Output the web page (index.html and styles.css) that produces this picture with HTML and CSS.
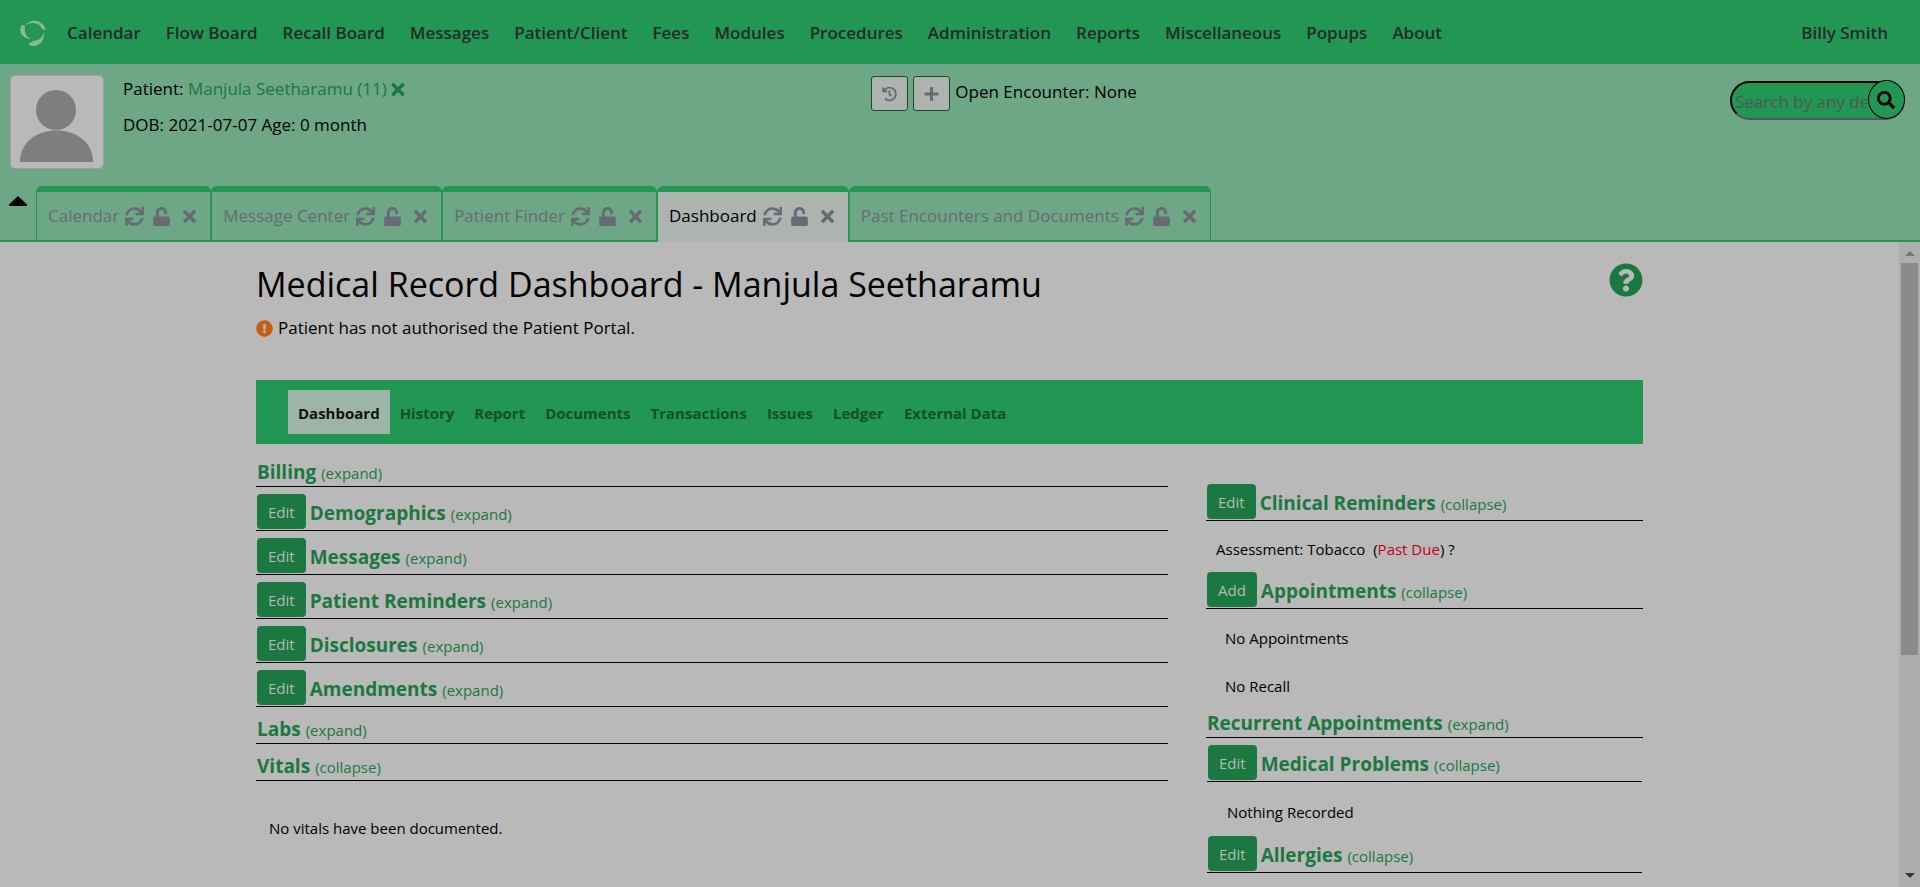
FILE: index.html
```html
<!DOCTYPE html>
<html lang="en">
<head>
<meta charset="utf-8">
<title>Medical Record Dashboard</title>
<link rel="stylesheet" href="styles.css">
</head>
<body>
<svg class="sprite" aria-hidden="true">
  <symbol id="i-sync" viewBox="0 0 512 512"><path d="M440.65 12.57l4 82.77A247.16 247.16 0 0 0 255.83 8C134.73 8 33.91 94.92 12.29 209.82A12 12 0 0 0 24.09 224h49.05a12 12 0 0 0 11.67-9.26 175.91 175.91 0 0 1 317-56.94l-101.46-4.86a12 12 0 0 0-12.57 12v47.41a12 12 0 0 0 12 12H500a12 12 0 0 0 12-12V12a12 12 0 0 0-12-12h-47.37a12 12 0 0 0-11.98 12.57zM255.83 432a175.61 175.61 0 0 1-146-77.8l101.8 4.87a12 12 0 0 0 12.57-12v-47.4a12 12 0 0 0-12-12H12a12 12 0 0 0-12 12V500a12 12 0 0 0 12 12h47.35a12 12 0 0 0 12-12.6l-4.15-82.57A247.17 247.17 0 0 0 255.83 504c121.11 0 221.93-86.92 243.55-201.82a12 12 0 0 0-11.8-14.18h-49.05a12 12 0 0 0-11.67 9.26A175.86 175.86 0 0 1 255.83 432z"/></symbol>
  <symbol id="i-unlock" viewBox="0 0 448 512"><path d="M400 256H152V152.9c0-39.6 31.7-72.5 71.3-72.9 40-.4 72.7 32.1 72.7 72v16c0 13.3 10.7 24 24 24h32c13.3 0 24-10.7 24-24v-16C376 68 307.5-.3 223.5 0 139.5.3 72 69.5 72 153.5V256H48c-26.5 0-48 21.5-48 48v160c0 26.5 21.5 48 48 48h352c26.5 0 48-21.5 48-48V304c0-26.5-21.5-48-48-48z"/></symbol>
  <symbol id="i-times" viewBox="0 0 352 512"><path d="M242.72 256l100.07-100.07c12.28-12.28 12.28-32.19 0-44.48l-22.24-22.24c-12.28-12.28-32.19-12.28-44.48 0L176 189.28 75.93 89.21c-12.28-12.28-32.19-12.28-44.48 0L9.21 111.45c-12.28 12.28-12.28 32.19 0 44.48L109.28 256 9.21 356.07c-12.28 12.28-12.28 32.19 0 44.48l22.24 22.24c12.28 12.28 32.2 12.28 44.48 0L176 322.72l100.07 100.07c12.28 12.28 32.2 12.28 44.48 0l22.24-22.24c12.28-12.28 12.28-32.19 0-44.48L242.72 256z"/></symbol>
  <symbol id="i-plus" viewBox="0 0 448 512"><path d="M416 208H272V64c0-17.67-14.33-32-32-32h-32c-17.67 0-32 14.33-32 32v144H32c-17.67 0-32 14.33-32 32v32c0 17.67 14.33 32 32 32h144v144c0 17.67 14.33 32 32 32h32c17.67 0 32-14.33 32-32V304h144c17.67 0 32-14.33 32-32v-32c0-17.67-14.33-32-32-32z"/></symbol>
  <symbol id="i-history" viewBox="0 0 512 512"><path d="M504 255.531c.253 136.64-111.18 248.372-247.82 248.468-59.015.042-113.223-20.53-155.822-54.911-11.077-8.94-11.905-25.541-1.839-35.607l11.267-11.267c8.609-8.609 22.353-9.551 31.891-1.984C173.062 425.135 212.781 440 256 440c101.705 0 184-82.311 184-184 0-101.705-82.311-184-184-184-48.814 0-93.149 18.969-126.068 49.932l50.754 50.754c10.08 10.08 2.941 27.314-11.313 27.314H24c-8.837 0-16-7.163-16-16V38.627c0-14.254 17.234-21.393 27.314-11.314l49.372 49.372C129.209 34.136 189.552 8 256 8c136.81 0 247.747 110.78 248 247.531zm-180.912 78.784l9.823-12.63c8.138-10.463 6.253-25.542-4.21-33.679L288 256.349V152c0-13.255-10.745-24-24-24h-16c-13.255 0-24 10.745-24 24v135.651l65.409 50.874c10.463 8.137 25.541 6.253 33.679-4.21z"/></symbol>
  <symbol id="i-search" viewBox="0 0 512 512"><path d="M505 442.7L405.3 343c-4.5-4.5-10.6-7-17-7H372c27.6-35.3 44-79.7 44-128C416 93.1 322.9 0 208 0S0 93.1 0 208s93.1 208 208 208c48.3 0 92.7-16.4 128-44v16.3c0 6.4 2.5 12.5 7 17l99.7 99.7c9.4 9.4 24.6 9.4 33.9 0l28.3-28.3c9.4-9.4 9.4-24.6.1-34zM208 336c-70.7 0-128-57.2-128-128 0-70.7 57.2-128 128-128 70.7 0 128 57.2 128 128 0 70.7-57.2 128-128 128z"/></symbol>
  <symbol id="i-help" viewBox="0 0 512 512"><path d="M504 256c0 136.997-111.043 248-248 248S8 392.997 8 256C8 119.083 119.043 8 256 8s248 111.083 248 248zM262.655 90c-54.497 0-89.255 22.957-116.549 63.758-3.536 5.286-2.353 12.415 2.715 16.258l34.699 26.31c5.205 3.947 12.621 3.008 16.665-2.122 17.864-22.658 30.113-35.797 57.303-35.797 20.429 0 45.698 13.148 45.698 32.958 0 14.976-12.363 22.667-32.534 33.976C247.128 238.528 216 254.941 216 296v4c0 6.627 5.373 12 12 12h56c6.627 0 12-5.373 12-12v-1.333c0-28.462 83.186-29.647 83.186-106.667 0-58.002-60.165-102-116.531-102zM256 338c-25.365 0-46 20.635-46 46 0 25.364 20.635 46 46 46s46-20.636 46-46c0-25.365-20.635-46-46-46z"/></symbol>
  <symbol id="i-alert" viewBox="0 0 512 512"><path d="M504 256c0 136.997-111.043 248-248 248S8 392.997 8 256C8 119.083 119.043 8 256 8s248 111.083 248 248zm-248 50c-25.405 0-46 20.595-46 46s20.595 46 46 46 46-20.595 46-46-20.595-46-46-46zm-43.673-165.346l7.418 136c.347 6.364 5.609 11.346 11.982 11.346h48.546c6.373 0 11.635-4.982 11.982-11.346l7.418-136c.375-6.874-5.098-12.654-11.982-12.654h-63.383c-6.884 0-12.356 5.78-11.981 12.654z"/></symbol>
</svg>

<header class="menubar">
  <a class="logo" href="#" aria-label="Home"><svg viewBox="0 0 26 26"><path d="M5 6C8 1 16-1 21 3c3 2 5 5 4 7-2 0-3-1-4-3C18 3 11 1 5 6z"/><path d="M1 6c2-2 4-1 4 1-1 5 1 10 6 12-6 0-13-5-10-13z"/><path d="M24 12c1 7-3 13-10 14-3 0-6-1-5-3 1-1 3-1 5-1-1 0-2-1-2-1 6 0 11-3 12-9z"/></svg></a>
  <nav class="menu">
    <a href="#">Calendar</a><a href="#">Flow Board</a><a href="#">Recall Board</a><a href="#">Messages</a><a href="#">Patient/Client</a><a href="#">Fees</a><a href="#">Modules</a><a href="#">Procedures</a><a href="#">Administration</a><a href="#">Reports</a><a href="#">Miscellaneous</a><a href="#">Popups</a><a href="#">About</a>
  </nav>
  <a class="user" href="#">Billy Smith</a>
</header>

<section class="patient-bar">
  <div class="patient">
    <div class="avatar"><svg viewBox="0 0 92 92" role="img" aria-label="Patient photo"><circle cx="45" cy="34" r="20"/><path d="M9 86C9 44 82 44 82 86z"/></svg></div>
    <div class="patient-info">
      <div class="patient-name">Patient:&nbsp;<a href="#">Manjula Seetharamu (11)</a><button class="icon-btn clear" aria-label="Clear patient"><svg><use href="#i-times"/></svg></button></div>
      <div>DOB: 2021-07-07 Age: 0 month</div>
    </div>
  </div>
  <div class="encounter">
    <button class="enc-btn" aria-label="Visit history"><svg><use href="#i-history"/></svg></button>
    <button class="enc-btn" aria-label="New encounter"><svg><use href="#i-plus"/></svg></button>
    <span>Open Encounter: None</span>
  </div>
  <form class="search">
    <input type="text" placeholder="Search by any demographics" aria-label="Search by any demographics">
    <button type="button" aria-label="Search"><svg><use href="#i-search"/></svg></button>
  </form>
</section>

<div class="tabstrip">
  <button class="collapse-btn" aria-label="Hide patient bar"></button>
  <div class="tab"><span>Calendar</span><button class="icon-btn" aria-label="Refresh"><svg><use href="#i-sync"/></svg></button><button class="icon-btn" aria-label="Lock"><svg><use href="#i-unlock"/></svg></button><button class="icon-btn" aria-label="Close"><svg><use href="#i-times"/></svg></button></div>
  <div class="tab"><span>Message Center</span><button class="icon-btn" aria-label="Refresh"><svg><use href="#i-sync"/></svg></button><button class="icon-btn" aria-label="Lock"><svg><use href="#i-unlock"/></svg></button><button class="icon-btn" aria-label="Close"><svg><use href="#i-times"/></svg></button></div>
  <div class="tab"><span>Patient Finder</span><button class="icon-btn" aria-label="Refresh"><svg><use href="#i-sync"/></svg></button><button class="icon-btn" aria-label="Lock"><svg><use href="#i-unlock"/></svg></button><button class="icon-btn" aria-label="Close"><svg><use href="#i-times"/></svg></button></div>
  <div class="tab active"><span>Dashboard</span><button class="icon-btn" aria-label="Refresh"><svg><use href="#i-sync"/></svg></button><button class="icon-btn" aria-label="Lock"><svg><use href="#i-unlock"/></svg></button><button class="icon-btn" aria-label="Close"><svg><use href="#i-times"/></svg></button></div>
  <div class="tab"><span>Past Encounters and Documents</span><button class="icon-btn" aria-label="Refresh"><svg><use href="#i-sync"/></svg></button><button class="icon-btn" aria-label="Lock"><svg><use href="#i-unlock"/></svg></button><button class="icon-btn" aria-label="Close"><svg><use href="#i-times"/></svg></button></div>
</div>

<div class="frame">
  <main class="page">
    <div class="title-row">
      <h1>Medical Record Dashboard - Manjula Seetharamu</h1>
      <a class="help" href="#" aria-label="Help"><svg><use href="#i-help"/></svg></a>
    </div>
    <p class="notice"><svg><use href="#i-alert"/></svg>Patient has not authorised the Patient Portal.</p>

    <nav class="subnav">
      <a class="current" href="#">Dashboard</a><a href="#">History</a><a href="#">Report</a><a href="#">Documents</a><a href="#">Transactions</a><a href="#">Issues</a><a href="#">Ledger</a><a href="#">External Data</a>
    </nav>

    <div class="columns">
      <div class="col-main">
        <div class="row plain"><a class="title" href="#"><b>Billing</b><span>(expand)</span></a></div>
        <div class="row"><button class="btn">Edit</button><a class="title" href="#"><b>Demographics</b><span>(expand)</span></a></div>
        <div class="row"><button class="btn">Edit</button><a class="title" href="#"><b>Messages</b><span>(expand)</span></a></div>
        <div class="row"><button class="btn">Edit</button><a class="title" href="#"><b>Patient Reminders</b><span>(expand)</span></a></div>
        <div class="row"><button class="btn">Edit</button><a class="title" href="#"><b>Disclosures</b><span>(expand)</span></a></div>
        <div class="row"><button class="btn">Edit</button><a class="title" href="#"><b>Amendments</b><span>(expand)</span></a></div>
        <div class="row plain"><a class="title" href="#"><b>Labs</b><span>(expand)</span></a></div>
        <div class="row plain"><a class="title" href="#"><b>Vitals</b><span>(collapse)</span></a></div>
        <p class="vitals-note">No vitals have been documented.</p>
      </div>
      <div class="col-side">
        <div class="row"><button class="btn">Edit</button><a class="title" href="#"><b>Clinical Reminders</b><span>(collapse)</span></a></div>
        <p class="reminder">Assessment: Tobacco &nbsp;(<span class="due">Past Due</span>) ?</p>
        <div class="row"><button class="btn">Add</button><a class="title" href="#"><b>Appointments</b><span>(collapse)</span></a></div>
        <div class="appts"><p>No Appointments</p><p>No Recall</p></div>
        <div class="row plain short"><a class="title" href="#"><b>Recurrent Appointments</b><span>(expand)</span></a></div>
        <div class="issues">
          <div class="row"><button class="btn">Edit</button><a class="title" href="#"><b>Medical Problems</b><span>(collapse)</span></a></div>
          <p class="nothing">Nothing Recorded</p>
          <div class="row"><button class="btn">Edit</button><a class="title" href="#"><b>Allergies</b><span>(collapse)</span></a></div>
        </div>
      </div>
    </div>
  </main>
  <div class="scrollbar" aria-hidden="true"><i class="up"></i><div class="track"><div class="thumb"></div></div><i class="down"></i></div>
</div>
</body>
</html>
```

FILE: styles.css
```css
:root {
  --green: #229653;
  --green-dark: #1a7840;
  --bar: #6ea786;
  --page: #b9b9b9;
  --muted: #666b75;
}
* { box-sizing: border-box; }
body {
  margin: 0;
  height: 100vh;
  display: flex;
  flex-direction: column;
  overflow: hidden;
  background: var(--page);
  color: #000;
  font: 17px/24px "Open Sans", "Noto Sans", sans-serif;
}
.sprite { display: none; }
svg { fill: currentColor; display: block; }
a { color: var(--green-dark); text-decoration: none; }
p, h1 { margin: 0; }
button { font: inherit; margin: 0; padding: 0; cursor: pointer; }

/* Main menu */
.menubar {
  flex: none;
  display: flex;
  align-items: center;
  height: 64px;
  padding: 2px 32px 0 20px;
  background: var(--green);
}
.menubar a { color: #24292e; font-weight: 600; white-space: nowrap; }
.menubar .logo { width: 26px; color: #8cb79d; }
.logo svg { width: 26px; height: 26px; }
.menu { display: flex; gap: 25px; padding-left: 21px; }
.user { margin-left: auto; }

/* Patient bar */
.patient-bar {
  flex: none;
  display: grid;
  grid-template-columns: 5fr 4fr 2fr;
  align-items: start;
  height: 122px;
  padding: 11px 15px 0 10px;
  background: var(--bar);
}
.patient { display: flex; align-items: start; gap: 19px; }
.avatar {
  width: 94px;
  height: 94px;
  border: 1px solid #a0a0a0;
  border-radius: 5px;
  background: var(--page);
  color: #7e7e7e;
}
.patient-info { display: grid; gap: 12px; padding-top: 2px; white-space: nowrap; }
.patient-name { display: flex; align-items: center; }
.icon-btn { border: 0; background: none; color: var(--muted); }
.icon-btn svg { height: 19px; width: 19px; }
.clear { margin-left: 4px; color: var(--green-dark); }
.clear svg { width: 14px; }
.encounter { display: flex; gap: 5px; padding-top: 1px; }
.enc-btn {
  display: grid;
  place-items: center;
  height: 35px;
  padding: 0 10px;
  border: 1px solid #134d2a;
  border-radius: 3px;
  background: #adb4b0;
  color: var(--muted);
}
.enc-btn svg { width: 15px; height: 16px; }
.encounter span { padding-top: 4px; }
.search { position: relative; justify-self: end; width: 175px; padding-top: 6px; }
.search input {
  display: block;
  width: 100%;
  height: 39px;
  padding: 2px 36px 0 3px;
  border: 2px inset #555;
  border-color: #111 #555 #555 #111;
  border-radius: 20px;
  background: var(--green);
  font: inherit;
}
.search input::placeholder { color: #555; opacity: 1; }
.search button {
  position: absolute;
  top: 5px;
  right: 0;
  display: grid;
  place-items: center;
  width: 37px;
  height: 39px;
  border: 1px solid #000;
  border-radius: 50%;
  background: var(--green);
  color: #000;
}
.search button svg { width: 18px; height: 18px; }

/* Open tabs */
.tabstrip {
  flex: none;
  display: flex;
  height: 56px;
  border-bottom: 2px solid var(--green);
  background: var(--bar);
}
.collapse-btn {
  width: 18px;
  height: 10px;
  margin: 10px 9px 0;
  border: 0;
  background: #000;
  clip-path: polygon(50% 0, 100% 85%, 100% 100%, 0 100%, 0 85%);
}
.tab {
  display: flex;
  align-items: center;
  padding: 0 14px 0 11px;
  border: 1px solid var(--green);
  border-top-width: 6px;
  border-bottom: 0;
  border-radius: 6px 6px 0 0;
  color: var(--muted);
  white-space: nowrap;
}
.tab .icon-btn { margin-left: 6px; }
.tab .icon-btn + .icon-btn { margin-left: 9px; }
.tab .icon-btn:last-child { margin-left: 13px; }
.tab .icon-btn:last-child svg { width: 13px; }
.tab .icon-btn:nth-child(3) svg { width: 17px; }
.tab.active { margin-bottom: -2px; padding-bottom: 2px; background: #adb4b0; color: #000; }

/* Page frame */
.frame { flex: 1; min-height: 0; display: flex; }
.page { flex: 1; padding: 18px 256px 0; }
.title-row { display: flex; justify-content: space-between; align-items: start; }
h1 { font-size: 34px; line-height: 48px; font-weight: 500; }
.help { padding-top: 3px; }
.help svg { width: 34px; height: 34px; }
.notice { display: flex; align-items: center; gap: 5px; padding-top: 8px; }
.notice svg { width: 17px; height: 17px; color: #c45f11; }
.subnav {
  display: flex;
  margin-top: 40px;
  padding: 10px 32px;
  background: var(--green);
  font-size: 15px;
  font-weight: 700;
}
.subnav a { padding: 11px 10px 9px; color: #11502b; }
.subnav .current { background: #9cb5a6; color: #111; }

.columns { display: grid; grid-template-columns: 912fr 437fr; gap: 38px; font-size: 15px; }
.col-main { padding-top: 6px; }
.col-side { padding-top: 33px; }
.row {
  display: flex;
  align-items: center;
  gap: 4px;
  padding: 7px 1px 1px;
  border-bottom: 1px solid #000;
}
.btn {
  height: 35px;
  padding: 0 11px;
  border: 0;
  border-radius: 4px;
  background: var(--green-dark);
  color: var(--page);
}
.title { display: flex; align-items: baseline; gap: 5px; padding-top: 2px; }
.title b { font-size: 19px; line-height: 26px; }
.row.plain { padding-top: 7px; padding-bottom: 1px; }
.row.plain.short { padding-top: 0; }
.vitals-note { padding: 35px 13px 0; }
.reminder { padding: 16px 10px 4px; }
.due { color: #c4001a; }
.appts { display: grid; gap: 24px; padding: 17px 19px 10px; }
.issues { margin: 0 1px; }
.nothing { padding: 18px 20px 5px; }

/* Scroll indicator */
.scrollbar {
  flex: none;
  display: flex;
  flex-direction: column;
  align-items: center;
  justify-content: space-between;
  width: 21px;
  padding: 9px 0;
  background: #aeaeae;
}
.track { flex: 1; width: 17px; padding: 7px 0; }
.thumb { height: 65%; background: #8b8b8b; }
.up, .down { border: 5px solid transparent; }
.up { border-top: 0; border-bottom-color: #757575; }
.down { border-bottom: 0; border-top-color: #383838; }
```
